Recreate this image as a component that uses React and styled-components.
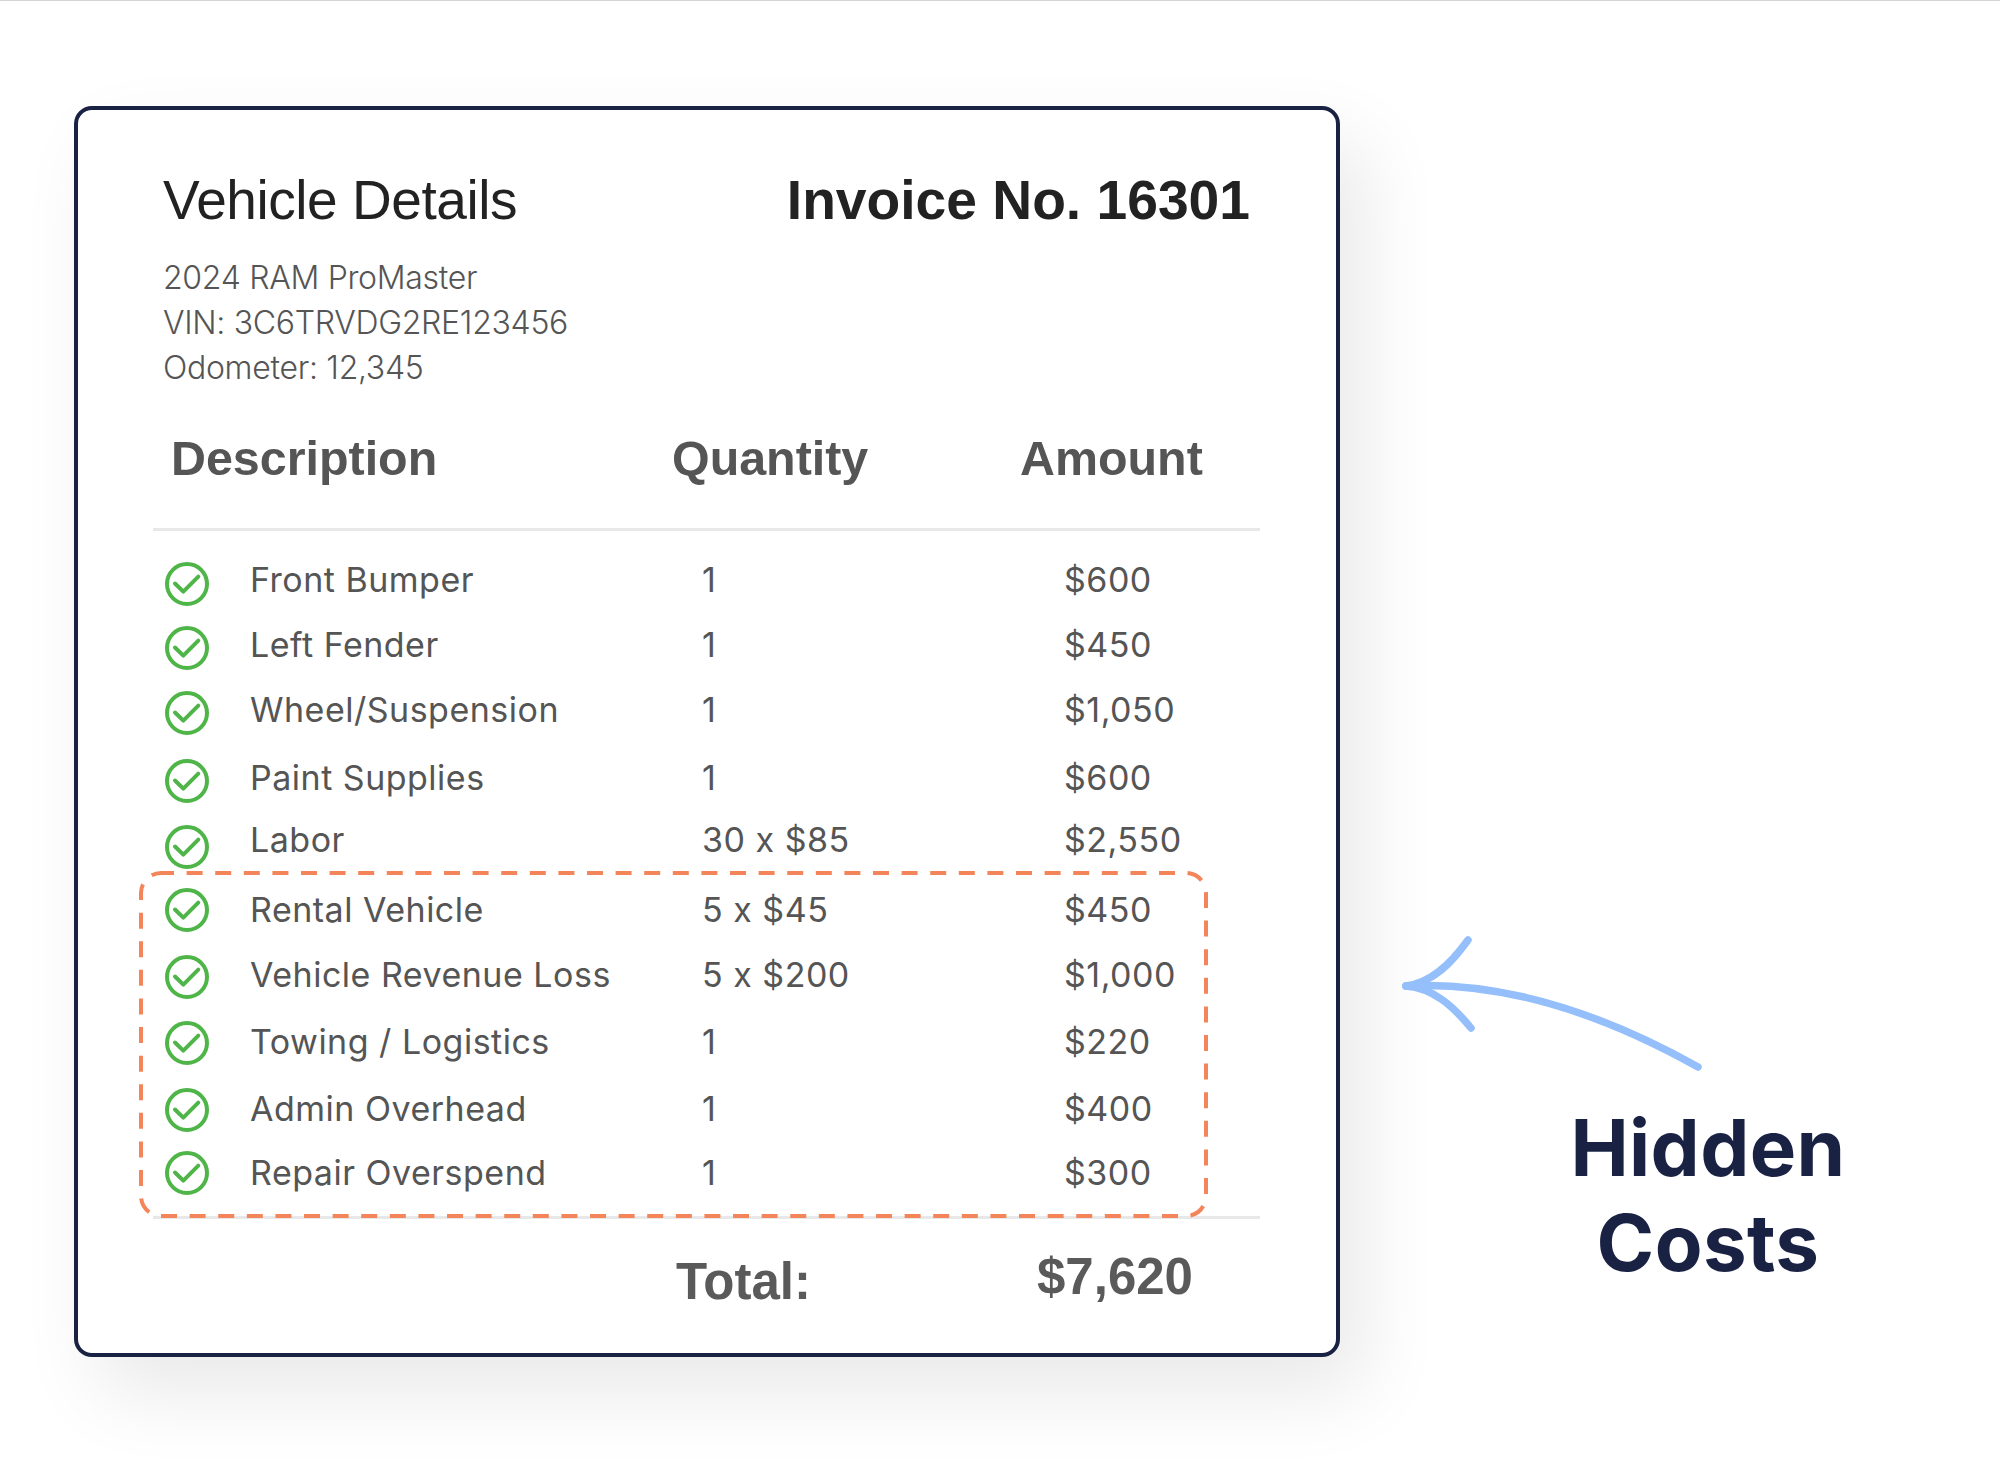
import React from "react";
import styled, { createGlobalStyle } from "styled-components";

const GlobalStyle = createGlobalStyle`
  html, body {
    margin: 0;
    padding: 0;
    background: #ffffff;
  }
`;

const rows = [
  { name: "Front Bumper", qty: "1", amount: "$600", gap: 0, iconDrop: 4 },
  { name: "Left Fender", qty: "1", amount: "$450", gap: 5, iconDrop: 3 },
  { name: "Wheel/Suspension", qty: "1", amount: "$1,050", gap: 5, iconDrop: 3 },
  { name: "Paint Supplies", qty: "1", amount: "$600", gap: 7.5, iconDrop: 4 },
  { name: "Labor", qty: "30 x $85", amount: "$2,550", gap: 2.5, iconDrop: 7 },
  { name: "Rental Vehicle", qty: "5 x $45", amount: "$450", gap: 10, iconDrop: 0 },
  { name: "Vehicle Revenue Loss", qty: "5 x $200", amount: "$1,000", gap: 5, iconDrop: 2 },
  { name: "Towing / Logistics", qty: "1", amount: "$220", gap: 6.5, iconDrop: 2 },
  { name: "Admin Overhead", qty: "1", amount: "$400", gap: 7.5, iconDrop: 1 },
  { name: "Repair Overspend", qty: "1", amount: "$300", gap: 3.5, iconDrop: 1 },
];

const Page = styled.div`
  display: flex;
  width: 2000px;
  height: 1460px;
  box-sizing: border-box;
  padding: 105px 0 0 74px;
  border-top: 1px solid #d4d4d4;
  overflow: hidden;
`;

const Card = styled.div`
  width: 1266px;
  height: 1251px;
  box-sizing: border-box;
  padding: 60px 76px 0 75px;
  background: #ffffff;
  border: 4px solid #1a2244;
  border-radius: 18px;
  box-shadow: 24px 36px 80px rgba(0, 0, 0, 0.09);
  flex-shrink: 0;
`;

const TopRow = styled.div`
  display: flex;
  justify-content: space-between;
  padding: 0 10px;
`;

const Title = styled.div`
  font-family: "Liberation Sans", sans-serif;
  font-size: ${(p) => (p.$bold ? "55.2px" : "55px")};
  line-height: 60px;
  font-weight: ${(p) => (p.$bold ? 700 : 400)};
  letter-spacing: ${(p) => (p.$bold ? "0" : "-0.45px")};
  color: #222222;
`;

const Meta = styled.div`
  margin: 25px 0 0 10px;
  font-family: "Inter", sans-serif;
  font-size: 32px;
  line-height: 45px;
  letter-spacing: -0.3px;
  font-weight: 300;
  color: #555555;
`;

const HeadRow = styled.div`
  display: grid;
  grid-template-columns: 501px 348px 1fr;
  height: 113px;
  margin-top: 28px;
  padding: 0 0 0 18px;
  box-sizing: border-box;
  border-bottom: 3px solid #e8e8e8;
`;

const HeadCell = styled.div`
  font-family: "Liberation Sans", sans-serif;
  font-size: 48.4px;
  line-height: 56px;
  font-weight: 700;
  color: #555555;
  margin-top: 12px;
`;

const Body = styled.div`
  position: relative;
  padding-top: 18.5px;
  height: 688px;
  box-sizing: border-box;
  border-bottom: 3px solid #e8e8e8;
`;

const Row = styled.div`
  display: grid;
  grid-template-columns: 97px 452px 362px 1fr;
  align-items: center;
  height: 60px;
  margin-top: ${(p) => p.$gap}px;
  font-family: "Inter", sans-serif;
  font-size: 34px;
  letter-spacing: 0.5px;
  font-weight: 400;
  color: #555555;
`;

const Check = styled.svg`
  width: 44px;
  height: 44px;
  margin: ${(p) => p.$drop * 2}px 0 0 12px;
  fill: none;
  stroke: #4fb548;
`;

const Cell = styled.span`
  white-space: nowrap;
`;

const Highlight = styled.svg`
  position: absolute;
  left: -14px;
  top: 340px;
  width: 1071px;
  height: 349px;
  pointer-events: none;
`;

const TotalRow = styled.div`
  display: grid;
  grid-template-columns: 523px 361px 1fr;
  padding-top: 33px;
  font-family: "Liberation Sans", sans-serif;
  font-weight: 700;
  color: #5a5a5a;
`;

const TotalLabel = styled.div`
  grid-column: 2 / 2;
  font-size: 51px;
  line-height: 56px;
  margin-top: 2px;
`;

const TotalAmount = styled.div`
  font-size: 51px;
  line-height: 56px;
  margin-top: -3px;
`;

const Aside = styled.div`
  display: flex;
  flex-direction: column;
  margin-top: 825px;
  width: 660px;
`;

const Arrow = styled.svg`
  width: 320px;
  height: 150px;
  margin-left: 58px;
  fill: none;
  stroke: #94bffa;
  stroke-width: 7.5;
  stroke-linecap: round;
`;

const Callout = styled.div`
  width: 736px;
  margin-top: 19px;
  text-align: center;
  font-family: "Inter", sans-serif;
  font-size: 78px;
  line-height: 95px;
  letter-spacing: 0.4px;
  font-weight: 700;
  color: #1a2244;
`;

function CheckIcon({ drop }) {
  return (
    <Check $drop={drop} viewBox="0 0 44 44">
      <circle cx="22" cy="22" r="20" strokeWidth="4" />
      <path d="M10 21.5 L18.3 29.7 L33.3 14.7" strokeWidth="4" strokeLinecap="round" strokeLinejoin="round" />
    </Check>
  );
}

export default function App() {
  return (
    <Page>
      <GlobalStyle />
      <Card>
        <TopRow>
          <Title>Vehicle Details</Title>
          <Title $bold>Invoice No. 16301</Title>
        </TopRow>
        <Meta>
          <div>2024 RAM ProMaster</div>
          <div>VIN: 3C6TRVDG2RE123456</div>
          <div>Odometer: 12,345</div>
        </Meta>
        <HeadRow>
          <HeadCell>Description</HeadCell>
          <HeadCell>Quantity</HeadCell>
          <HeadCell>Amount</HeadCell>
        </HeadRow>
        <Body>
          {rows.map((row) => (
            <Row key={row.name} $gap={row.gap}>
              <CheckIcon drop={row.iconDrop} />
              <Cell>{row.name}</Cell>
              <Cell>{row.qty}</Cell>
              <Cell>{row.amount}</Cell>
            </Row>
          ))}
          <Highlight viewBox="0 0 1071 349">
            <rect
              x="2"
              y="2"
              width="1065"
              height="343"
              rx="20"
              fill="none"
              stroke="#f4855a"
              strokeWidth="4"
              strokeDasharray="16 12.6"
              strokeDashoffset="3"
            />
          </Highlight>
        </Body>
        <TotalRow>
          <TotalLabel>Total:</TotalLabel>
          <TotalAmount>$7,620</TotalAmount>
        </TotalRow>
      </Card>
      <Aside>
        <Arrow viewBox="0 0 320 150">
          <path d="M8 55 C 100 50, 200 80, 300 136" />
          <path d="M8 55 C 35 52, 55 30, 70 9" />
          <path d="M8 55 C 35 57, 55 75, 73 97" />
        </Arrow>
        <Callout>
          Hidden
          <br />
          Costs
        </Callout>
      </Aside>
    </Page>
  );
}
